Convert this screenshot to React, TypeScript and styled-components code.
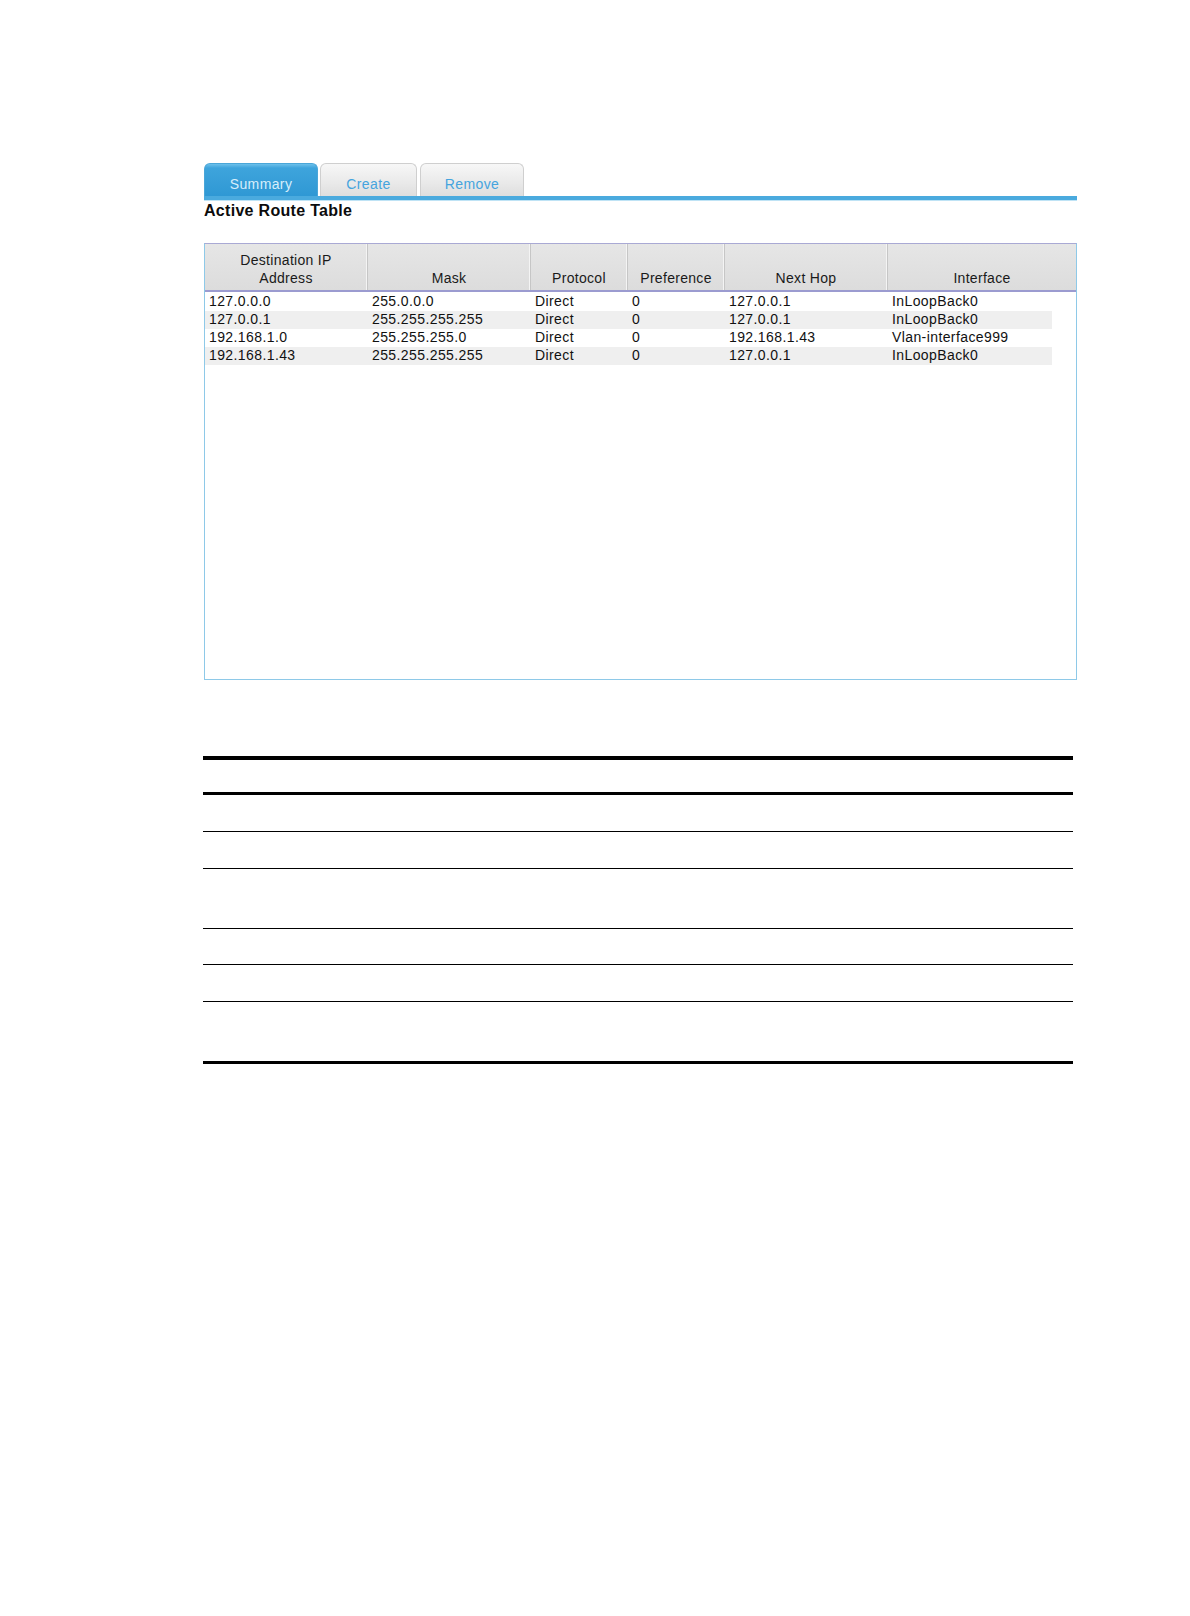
import React from 'react';
import styled, {createGlobalStyle} from 'styled-components';

const GlobalStyle = createGlobalStyle`
  html, body {
    margin: 0;
    padding: 0;
    background: #ffffff;
  }
  body {
    font-family: "Liberation Sans", Arial, sans-serif;
    color: #111;
  }
`;

const Page = styled.div`
  width: 1190px;
  min-height: 1616px;
  padding: 163px 0 0 204px;
  box-sizing: border-box;
`;

const Panel = styled.div`
  width: 873px;
`;

const TabBar = styled.div`
  display: flex;
  align-items: flex-end;
  height: 33px;
  border-bottom: 4px solid #4aaade;
  box-shadow: 0 1px 0 #bfe3f5;
`;

const Tab = styled.div<{active?: boolean; w: number}>`
  width: ${({w}) => w}px;
  height: 33px;
  margin-right: ${({active}) => (active ? 2 : 3)}px;
  box-sizing: border-box;
  border-radius: 6px 6px 0 0;
  display: flex;
  align-items: flex-end;
  justify-content: center;
  padding-bottom: 4px;
  font-size: 14px;
  letter-spacing: 0.4px;
  color: ${({active}) => (active ? '#d6eefb' : '#45a4de')};
  background: ${({active}) =>
    active
      ? 'linear-gradient(#6cc0ea 0px, #3ea4dc 4px, #2f98d4 100%)'
      : 'linear-gradient(#f7f7f7, #e9e9e9 60%, #dedede)'};
  border: 1px solid ${({active}) => (active ? '#4aa6d8' : '#cfcfcf')};
  border-bottom: none;
`;

const Title = styled.div`
  font-size: 16px;
  font-weight: bold;
  margin-top: 2px;
  height: 41px;
  letter-spacing: 0.3px;
  color: #0c0c0c;
`;

const RouteBox = styled.div`
  height: 437px;
  box-sizing: border-box;
  border: 1px solid #8ec9e8;
  border-top-color: #a9a9d4;
  background: #fff;
`;

const Columns = `
  display: grid;
  grid-template-columns: 163px 163px 97px 97px 163px 1fr;
`;

const HeadRow = styled.div`
  ${Columns};
  height: 46px;
  background: linear-gradient(#e6e6e6, #dcdcdc);
  border-bottom: 2px solid #9b9bd0;
`;

const HeadCell = styled.div`
  display: flex;
  align-items: flex-end;
  justify-content: center;
  text-align: center;
  padding-bottom: 3px;
  font-size: 14px;
  line-height: 18px;
  letter-spacing: 0.3px;
  color: #1a1a1a;
  border-right: 1px solid #c6c6c6;
  box-shadow: inset -1px 0 0 #f4f4f4;
  &:last-child {
    border-right: none;
    box-shadow: none;
  }
`;

const Body = styled.div`
  padding-top: 1px;
  width: calc(100% - 24px);
`;

const DataRow = styled.div<{striped?: boolean}>`
  ${Columns};
  height: 18px;
  background: ${({striped}) => (striped ? '#efefef' : '#ffffff')};
`;

const DataCell = styled.div`
  padding-left: 4px;
  font-size: 14px;
  line-height: 17px;
  letter-spacing: 0.4px;
  color: #111;
  white-space: nowrap;
`;

const RuleTable = styled.div`
  width: 870px;
  margin: 76px 0 0 -1px;
  border-top: 4px solid #000;
`;

const RuleRow = styled.div<{h: number; thick?: number}>`
  height: ${({h}) => h}px;
  border-bottom: ${({thick}) => thick ?? 1.5}px solid #000;
`;

const headers = [
  ['Destination IP', 'Address'],
  ['Mask'],
  ['Protocol'],
  ['Preference'],
  ['Next Hop'],
  ['Interface'],
];

const routes = [
  ['127.0.0.0', '255.0.0.0', 'Direct', '0', '127.0.0.1', 'InLoopBack0'],
  ['127.0.0.1', '255.255.255.255', 'Direct', '0', '127.0.0.1', 'InLoopBack0'],
  ['192.168.1.0', '255.255.255.0', 'Direct', '0', '192.168.1.43', 'Vlan-interface999'],
  ['192.168.1.43', '255.255.255.255', 'Direct', '0', '127.0.0.1', 'InLoopBack0'],
];

const rules = [
  {h: 32, thick: 3},
  {h: 36},
  {h: 36},
  {h: 59},
  {h: 35},
  {h: 36},
  {h: 59, thick: 3},
];

const App = () => {
  return (
    <Page>
      <GlobalStyle />
      <Panel>
        <TabBar>
          <Tab active w={114}>Summary</Tab>
          <Tab w={97}>Create</Tab>
          <Tab w={104}>Remove</Tab>
        </TabBar>
        <Title>Active Route Table</Title>
        <RouteBox>
          <HeadRow>
            {headers.map((h) => (
              <HeadCell key={h.join(' ')}>
                {h.map((line, i) => (
                  <React.Fragment key={line}>
                    {i > 0 && <br />}
                    {line}
                  </React.Fragment>
                ))}
              </HeadCell>
            ))}
          </HeadRow>
          <Body>
            {routes.map((r, i) => (
              <DataRow key={r[0]} striped={i % 2 === 1}>
                {r.map((v, j) => (
                  <DataCell key={j}>{v}</DataCell>
                ))}
              </DataRow>
            ))}
          </Body>
        </RouteBox>
        <RuleTable>
          {rules.map((r, i) => (
            <RuleRow key={i} h={r.h} thick={r.thick} />
          ))}
        </RuleTable>
      </Panel>
    </Page>
  );
};

export default App;
